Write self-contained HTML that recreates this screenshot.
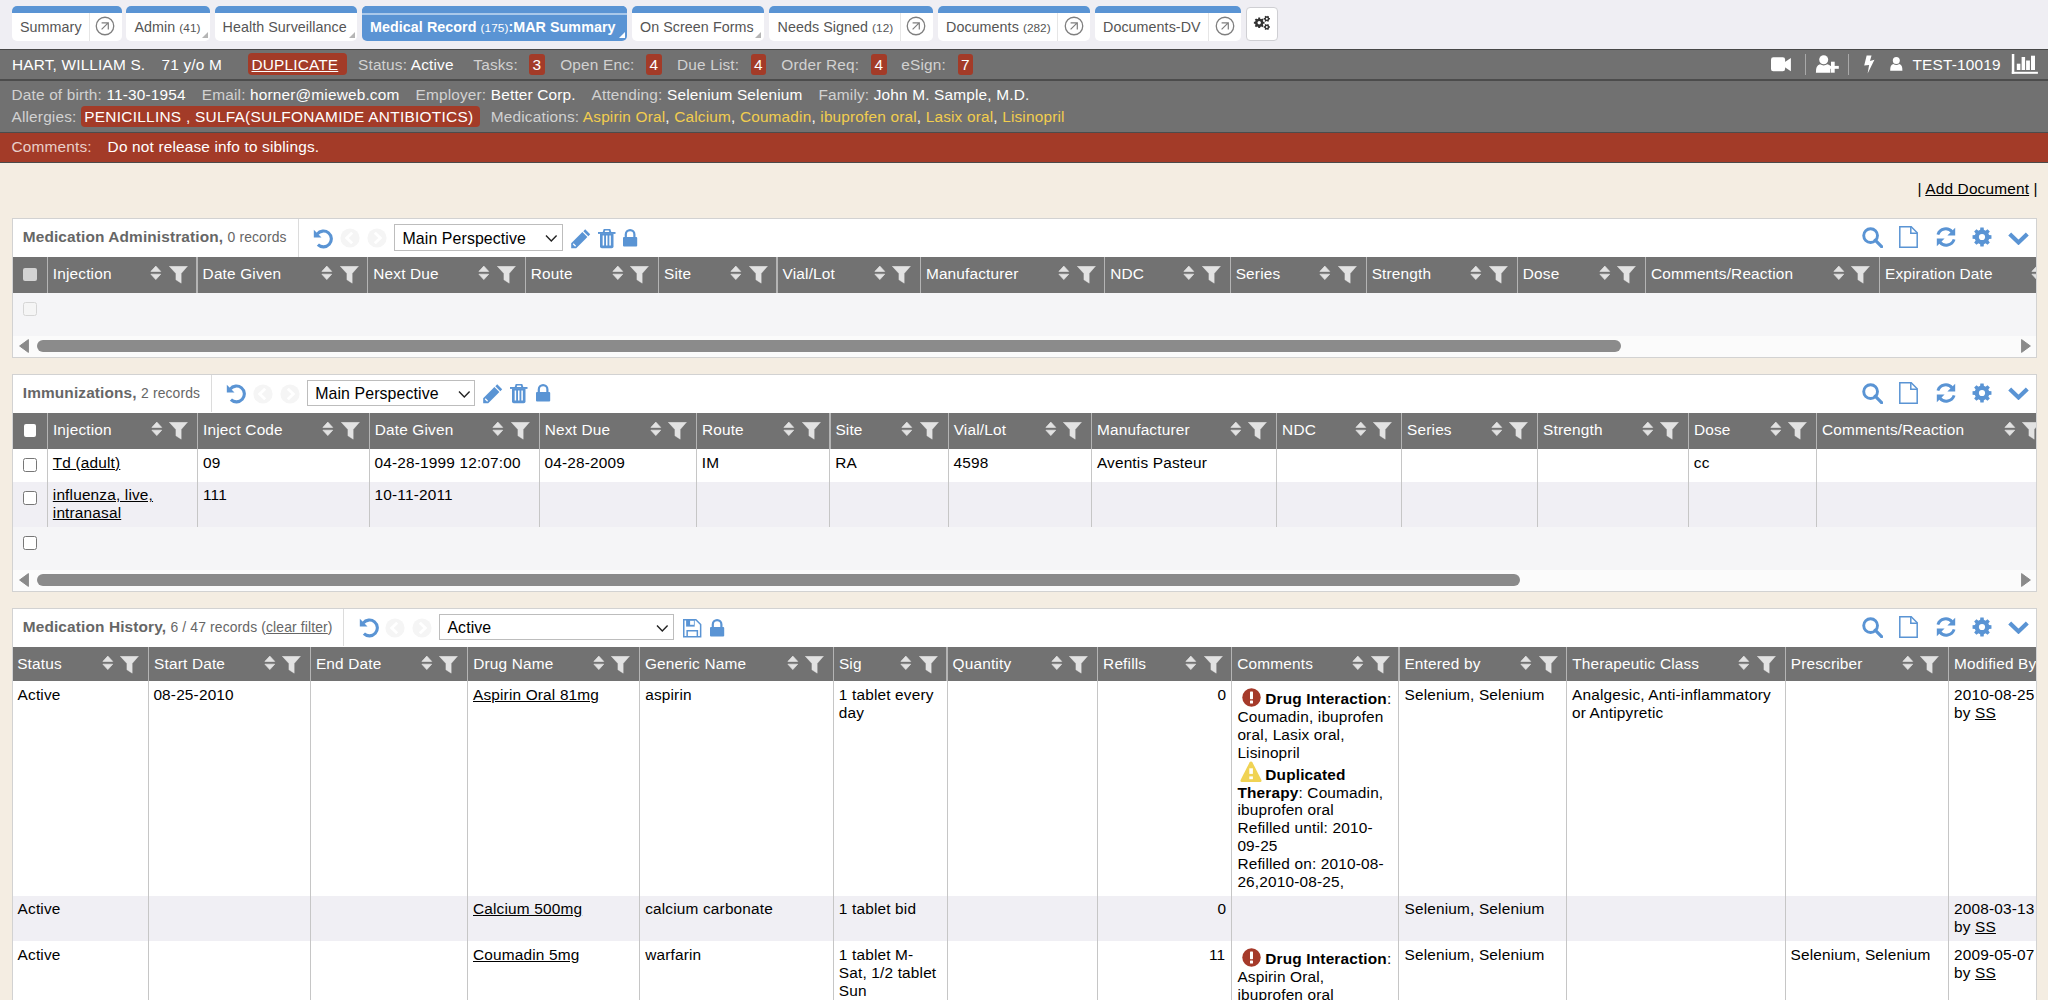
<!DOCTYPE html><html><head><meta charset="utf-8"><style>
html,body{margin:0;padding:0;width:2048px;height:1000px;overflow:hidden;background:#f4ede2;font-family:"Liberation Sans",sans-serif;}
.a{position:absolute;}
.t{position:absolute;white-space:nowrap;}
.u{text-decoration:underline;text-underline-offset:0.6px;}
svg{display:block;}
</style></head><body>
<div class="a" style="left:0px;top:0px;width:2048px;height:49px;background:#efeef3"></div>
<div class="a" style="left:12px;top:6px;width:109.5px;height:34.6px;background:#fff;border-radius:5px 5px 5px 5px;overflow:hidden"></div>
<div class="a" style="left:12px;top:6px;width:109.5px;height:7.4px;background:#5a94d4;border-radius:5px 5px 0 0"></div>
<div class="a" style="left:89.0px;top:13.4px;width:1px;height:27.200000000000003px;background:#e6e6e6"></div>
<svg class="a" style="left:95.3px;top:16.2px;" width="20" height="20" viewBox="0 0 20 20"><circle cx="10" cy="10" r="8.75" fill="none" stroke="#7f7f7f" stroke-width="1.3"/><path d="M6.6 13.4 L13.2 6.9 M6.6 6.9 H13.3 V13.6" fill="none" stroke="#7f7f7f" stroke-width="1.2"/></svg>
<div class="t " style="left:20px;top:18.55px;font-size:14.3px;letter-spacing:0.06px;line-height:17px;color:#555;">Summary</div>
<div class="a" style="left:126px;top:6px;width:84px;height:34.6px;background:#fff;border-radius:5px 5px 5px 5px;overflow:hidden"></div>
<div class="a" style="left:126px;top:6px;width:84px;height:7.4px;background:#5a94d4;border-radius:5px 5px 0 0"></div>
<svg class="a" style="left:201.5px;top:31.800000000000004px;" width="6" height="6" viewBox="0 0 6 6"><path d="M6 0 V6 H0 Z" fill="#b5b5b5"/></svg>
<div class="t " style="left:134.5px;top:18.55px;font-size:14.3px;letter-spacing:0.06px;line-height:17px;color:#555;">Admin <span style="font-size:11.8px">(41)</span></div>
<div class="a" style="left:214.6px;top:6px;width:142.4px;height:34.6px;background:#fff;border-radius:5px 5px 5px 5px;overflow:hidden"></div>
<div class="a" style="left:214.6px;top:6px;width:142.4px;height:7.4px;background:#5a94d4;border-radius:5px 5px 0 0"></div>
<svg class="a" style="left:348.5px;top:31.800000000000004px;" width="6" height="6" viewBox="0 0 6 6"><path d="M6 0 V6 H0 Z" fill="#b5b5b5"/></svg>
<div class="t " style="left:222.5px;top:18.55px;font-size:14.3px;letter-spacing:0.06px;line-height:17px;color:#555;">Health Surveillance</div>
<div class="a" style="left:362px;top:6px;width:265px;height:34.6px;background:#5a94d4;border-radius:5px 5px 5px 5px;overflow:hidden"></div>
<div class="a" style="left:362px;top:6px;width:265px;height:7.4px;background:#5a94d4;border-radius:5px 5px 0 0"></div>
<div class="a" style="left:362px;top:13.4px;width:265px;height:1.3px;background:#a9c8ea"></div>
<svg class="a" style="left:618.5px;top:31.800000000000004px;" width="6" height="6" viewBox="0 0 6 6"><path d="M6 0 V6 H0 Z" fill="#fff"/></svg>
<div class="t " style="left:370px;top:18.55px;font-size:14.3px;letter-spacing:0.06px;line-height:17px;color:#fff;font-weight:bold;">Medical Record <span style="font-size:11.8px;font-weight:normal">(175)</span>:MAR Summary</div>
<div class="a" style="left:632px;top:6px;width:131.70000000000005px;height:34.6px;background:#fff;border-radius:5px 5px 5px 5px;overflow:hidden"></div>
<div class="a" style="left:632px;top:6px;width:131.70000000000005px;height:7.4px;background:#5a94d4;border-radius:5px 5px 0 0"></div>
<svg class="a" style="left:755.2px;top:31.800000000000004px;" width="6" height="6" viewBox="0 0 6 6"><path d="M6 0 V6 H0 Z" fill="#b5b5b5"/></svg>
<div class="t " style="left:640px;top:18.55px;font-size:14.3px;letter-spacing:0.06px;line-height:17px;color:#555;">On Screen Forms</div>
<div class="a" style="left:769px;top:6px;width:163.79999999999995px;height:34.6px;background:#fff;border-radius:5px 5px 5px 5px;overflow:hidden"></div>
<div class="a" style="left:769px;top:6px;width:163.79999999999995px;height:7.4px;background:#5a94d4;border-radius:5px 5px 0 0"></div>
<div class="a" style="left:900.0px;top:13.4px;width:1px;height:27.200000000000003px;background:#e6e6e6"></div>
<svg class="a" style="left:905.9px;top:16.2px;" width="20" height="20" viewBox="0 0 20 20"><circle cx="10" cy="10" r="8.75" fill="none" stroke="#7f7f7f" stroke-width="1.3"/><path d="M6.6 13.4 L13.2 6.9 M6.6 6.9 H13.3 V13.6" fill="none" stroke="#7f7f7f" stroke-width="1.2"/></svg>
<div class="t " style="left:777.5px;top:18.55px;font-size:14.3px;letter-spacing:0.06px;line-height:17px;color:#555;">Needs Signed <span style="font-size:11.8px">(12)</span></div>
<div class="a" style="left:938px;top:6px;width:151.5999999999999px;height:34.6px;background:#fff;border-radius:5px 5px 5px 5px;overflow:hidden"></div>
<div class="a" style="left:938px;top:6px;width:151.5999999999999px;height:7.4px;background:#5a94d4;border-radius:5px 5px 0 0"></div>
<div class="a" style="left:1056.9px;top:13.4px;width:1px;height:27.200000000000003px;background:#e6e6e6"></div>
<svg class="a" style="left:1063.5px;top:16.2px;" width="20" height="20" viewBox="0 0 20 20"><circle cx="10" cy="10" r="8.75" fill="none" stroke="#7f7f7f" stroke-width="1.3"/><path d="M6.6 13.4 L13.2 6.9 M6.6 6.9 H13.3 V13.6" fill="none" stroke="#7f7f7f" stroke-width="1.2"/></svg>
<div class="t " style="left:946px;top:18.55px;font-size:14.3px;letter-spacing:0.06px;line-height:17px;color:#555;">Documents <span style="font-size:11.8px">(282)</span></div>
<div class="a" style="left:1095.2px;top:6px;width:145.5999999999999px;height:34.6px;background:#fff;border-radius:5px 5px 5px 5px;overflow:hidden"></div>
<div class="a" style="left:1095.2px;top:6px;width:145.5999999999999px;height:7.4px;background:#5a94d4;border-radius:5px 5px 0 0"></div>
<div class="a" style="left:1207.5px;top:13.4px;width:1px;height:27.200000000000003px;background:#e6e6e6"></div>
<svg class="a" style="left:1214.5px;top:16.2px;" width="20" height="20" viewBox="0 0 20 20"><circle cx="10" cy="10" r="8.75" fill="none" stroke="#7f7f7f" stroke-width="1.3"/><path d="M6.6 13.4 L13.2 6.9 M6.6 6.9 H13.3 V13.6" fill="none" stroke="#7f7f7f" stroke-width="1.2"/></svg>
<div class="t " style="left:1103px;top:18.55px;font-size:14.3px;letter-spacing:0.06px;line-height:17px;color:#555;">Documents-DV</div>
<div class="a" style="left:1246px;top:6.6px;width:29.6px;height:32px;background:#fff;border:1px solid #cfcfd3;border-radius:4px"></div>
<svg class="a" style="left:1251px;top:12px;" width="21" height="21" viewBox="0 0 21 21"><path d="M12.06 9.73 L13.52 9.87 L13.52 11.73 L12.06 11.87 L11.68 12.77 L12.62 13.91 L11.31 15.22 L10.17 14.28 L9.27 14.66 L9.13 16.12 L7.27 16.12 L7.13 14.66 L6.23 14.28 L5.09 15.22 L3.78 13.91 L4.72 12.77 L4.34 11.87 L2.88 11.73 L2.88 9.87 L4.34 9.73 L4.72 8.83 L3.78 7.69 L5.09 6.38 L6.23 7.32 L7.13 6.94 L7.27 5.48 L9.13 5.48 L9.27 6.94 L10.17 7.32 L11.31 6.38 L12.62 7.69 L11.68 8.83 Z" fill="#333"/><circle cx="8.2" cy="10.8" r="3.92" fill="#333"/><circle cx="8.2" cy="10.8" r="1.7" fill="#fff"/><path d="M17.95 5.99 L18.92 6.07 L18.92 7.53 L17.95 7.61 L17.58 8.26 L17.99 9.13 L16.72 9.86 L16.17 9.07 L15.43 9.07 L14.88 9.86 L13.61 9.13 L14.02 8.26 L13.65 7.61 L12.68 7.53 L12.68 6.07 L13.65 5.99 L14.02 5.34 L13.61 4.47 L14.88 3.74 L15.43 4.53 L16.17 4.53 L16.72 3.74 L17.99 4.47 L17.58 5.34 Z" fill="#333"/><circle cx="15.8" cy="6.8" r="2.25" fill="#333"/><circle cx="15.8" cy="6.8" r="1.0" fill="#fff"/><path d="M17.95 14.19 L18.92 14.27 L18.92 15.73 L17.95 15.81 L17.58 16.46 L17.99 17.33 L16.72 18.06 L16.17 17.27 L15.43 17.27 L14.88 18.06 L13.61 17.33 L14.02 16.46 L13.65 15.81 L12.68 15.73 L12.68 14.27 L13.65 14.19 L14.02 13.54 L13.61 12.67 L14.88 11.94 L15.43 12.73 L16.17 12.73 L16.72 11.94 L17.99 12.67 L17.58 13.54 Z" fill="#333"/><circle cx="15.8" cy="15" r="2.25" fill="#333"/><circle cx="15.8" cy="15" r="1.0" fill="#fff"/></svg>
<div class="a" style="left:0px;top:48.5px;width:2048px;height:1.5px;background:#474747"></div>
<div class="a" style="left:0px;top:50px;width:2048px;height:29px;background:#717171"></div>
<div class="a" style="left:0px;top:79px;width:2048px;height:1.5px;background:#4c4c4c"></div>
<div class="a" style="left:0px;top:80.5px;width:2048px;height:51px;background:#717171"></div>
<div class="a" style="left:0px;top:131.5px;width:2048px;height:1.5px;background:#4c4c4c"></div>
<div class="a" style="left:0px;top:133px;width:2048px;height:29px;background:#a33b28"></div>
<div class="a" style="left:0px;top:161.7px;width:2048px;height:1.5px;background:#4a4a4a"></div>
<div class="t " style="left:12px;top:55.56px;font-size:15.4px;letter-spacing:0.17px;line-height:18px;color:#fff;">HART, WILLIAM S.</div>
<div class="t " style="left:161.5px;top:55.56px;font-size:15.4px;letter-spacing:0.17px;line-height:18px;color:#fff;">71 y/o M</div>
<div class="a" style="left:248px;top:53.4px;width:98.7px;height:21.4px;background:#a33b28;border-radius:4px"></div>
<div class="t u" style="left:251.5px;top:55.56px;font-size:15.4px;letter-spacing:0.17px;line-height:18px;color:#fff;">DUPLICATE</div>
<div class="t " style="left:358px;top:55.56px;font-size:15.4px;letter-spacing:0.17px;line-height:18px;color:#d2d2d2;">Status: <span style="color:#fff">Active</span></div>
<div class="t " style="left:473.3px;top:55.56px;font-size:15.4px;letter-spacing:0.17px;line-height:18px;color:#d2d2d2;">Tasks:</div>
<div class="a" style="left:529.1px;top:53.6px;width:15.600000000000023px;height:21.2px;background:#a33b28;border-radius:3px"></div>
<div class="t " style="left:532.5000000000001px;top:55.56px;font-size:15.4px;letter-spacing:0.17px;line-height:18px;color:#fff;">3</div>
<div class="t " style="left:560.2px;top:55.56px;font-size:15.4px;letter-spacing:0.17px;line-height:18px;color:#d2d2d2;">Open Enc:</div>
<div class="a" style="left:646px;top:53.6px;width:15.799999999999955px;height:21.2px;background:#a33b28;border-radius:3px"></div>
<div class="t " style="left:649.5px;top:55.56px;font-size:15.4px;letter-spacing:0.17px;line-height:18px;color:#fff;">4</div>
<div class="t " style="left:677px;top:55.56px;font-size:15.4px;letter-spacing:0.17px;line-height:18px;color:#d2d2d2;">Due List:</div>
<div class="a" style="left:750.8px;top:53.6px;width:15.200000000000045px;height:21.2px;background:#a33b28;border-radius:3px"></div>
<div class="t " style="left:754.0px;top:55.56px;font-size:15.4px;letter-spacing:0.17px;line-height:18px;color:#fff;">4</div>
<div class="t " style="left:781.3px;top:55.56px;font-size:15.4px;letter-spacing:0.17px;line-height:18px;color:#d2d2d2;">Order Req:</div>
<div class="a" style="left:870.8px;top:53.6px;width:16.200000000000045px;height:21.2px;background:#a33b28;border-radius:3px"></div>
<div class="t " style="left:874.5px;top:55.56px;font-size:15.4px;letter-spacing:0.17px;line-height:18px;color:#fff;">4</div>
<div class="t " style="left:901.3px;top:55.56px;font-size:15.4px;letter-spacing:0.17px;line-height:18px;color:#d2d2d2;">eSign:</div>
<div class="a" style="left:957.7px;top:53.6px;width:15.199999999999932px;height:21.2px;background:#a33b28;border-radius:3px"></div>
<div class="t " style="left:960.9px;top:55.56px;font-size:15.4px;letter-spacing:0.17px;line-height:18px;color:#fff;">7</div>
<svg class="a" style="left:1770.5px;top:56.8px;" width="21" height="15" viewBox="0 0 21 15"><rect x="0" y="0.2" width="14.1" height="14" rx="2.3" fill="#fff"/><path d="M13.5 5.3 L19.9 0.9 V14.2 L13.5 10 Z" fill="#fff"/></svg>
<div class="a" style="left:1805.2px;top:53.6px;width:1.2px;height:21.8px;background:#a9a9a9"></div>
<svg class="a" style="left:1815px;top:55px;" width="24" height="19" viewBox="0 0 24 19"><circle cx="8.7" cy="4.8" r="4.5" fill="#fff"/><path d="M0.9 17.7 Q0.5 10.6 5 9.3 Q8.7 11.6 12.4 9.3 Q14.6 9.8 15.4 11 V17.7 Z" fill="#fff"/><rect x="16" y="6.7" width="3.7" height="11" fill="#fff"/><rect x="11.6" y="10.9" width="12.2" height="2.9" fill="#fff"/></svg>
<div class="a" style="left:1847.8px;top:53.6px;width:1.2px;height:21.8px;background:#a9a9a9"></div>
<svg class="a" style="left:1863.5px;top:54.5px;" width="11" height="19" viewBox="0 0 11 19"><path d="M2.65 0.38 L7.54 0.38 L5.97 6 L10.46 4.78 L3.63 18.45 L5.1 9.9 L0.21 10.4 Z" fill="#fff"/></svg>
<svg class="a" style="left:1889.5px;top:57px;" width="13" height="14" viewBox="0 0 13 14"><circle cx="6.3" cy="3.6" r="3.5" fill="#fff"/><path d="M0.2 13.8 Q0 7.6 3.3 7 Q6.3 9.2 9.3 7 Q12.6 7.6 12.4 13.8 Z" fill="#fff"/></svg>
<div class="t " style="left:1912.5px;top:55.56px;font-size:15.4px;letter-spacing:0.17px;line-height:18px;color:#fff;">TEST-10019</div>
<svg class="a" style="left:2011px;top:54px;" width="28" height="20" viewBox="0 0 28 20"><rect x="0.8" y="0" width="2.5" height="19.8" fill="#fff"/><rect x="0.8" y="17.8" width="26.1" height="2" fill="#fff"/><rect x="5.8" y="9.7" width="3.6" height="6.3" fill="#fff"/><rect x="10.6" y="3" width="3.5" height="13" fill="#fff"/><rect x="15.1" y="6.5" width="3.8" height="9.5" fill="#fff"/><rect x="20" y="1.7" width="4" height="14.3" fill="#fff"/></svg>
<div class="t " style="left:11.5px;top:86.16px;font-size:15.4px;letter-spacing:0.17px;line-height:18px;color:#d2d2d2;">Date of birth: <span style="color:#fff">11-30-1954</span></div>
<div class="t " style="left:201.8px;top:86.16px;font-size:15.4px;letter-spacing:0.17px;line-height:18px;color:#d2d2d2;">Email: <span style="color:#fff">horner@mieweb.com</span></div>
<div class="t " style="left:415.5px;top:86.16px;font-size:15.4px;letter-spacing:0.17px;line-height:18px;color:#d2d2d2;">Employer: <span style="color:#fff">Better Corp.</span></div>
<div class="t " style="left:591.5px;top:86.16px;font-size:15.4px;letter-spacing:0.17px;line-height:18px;color:#d2d2d2;">Attending: <span style="color:#fff">Selenium Selenium</span></div>
<div class="t " style="left:818.5px;top:86.16px;font-size:15.4px;letter-spacing:0.17px;line-height:18px;color:#d2d2d2;">Family: <span style="color:#fff">John M. Sample, M.D.</span></div>
<div class="t " style="left:11.5px;top:107.66px;font-size:15.4px;letter-spacing:0.17px;line-height:18px;color:#d2d2d2;">Allergies:</div>
<div class="a" style="left:81px;top:105.9px;width:398.9px;height:21.6px;background:#a33b28;border-radius:4px"></div>
<div class="t " style="left:84.3px;top:107.66px;font-size:15.4px;letter-spacing:0.17px;line-height:18px;color:#fff;letter-spacing:0.27px">PENICILLINS , SULFA(SULFONAMIDE ANTIBIOTICS)</div>
<div class="t " style="left:490.8px;top:107.66px;font-size:15.4px;letter-spacing:0.17px;line-height:18px;color:#d2d2d2;">Medications: <span style="color:#f2cd4e">Aspirin Oral</span><span style="color:#fff">,</span> <span style="color:#f2cd4e">Calcium</span><span style="color:#fff">,</span> <span style="color:#f2cd4e">Coumadin</span><span style="color:#fff">,</span> <span style="color:#f2cd4e">ibuprofen oral</span><span style="color:#fff">,</span> <span style="color:#f2cd4e">Lasix oral</span><span style="color:#fff">,</span> <span style="color:#f2cd4e">Lisinopril</span></div>
<div class="t " style="left:11.5px;top:137.96px;font-size:15.4px;letter-spacing:0.17px;line-height:18px;color:#e9cfc8;">Comments:</div>
<div class="t " style="left:107.6px;top:137.96px;font-size:15.4px;letter-spacing:0.17px;line-height:18px;color:#fff;">Do not release info to siblings.</div>
<div class="t " style="left:1917.5px;top:180.16px;font-size:15.4px;letter-spacing:0.17px;line-height:18px;color:#000;">| <span class="u">Add Document</span> |</div>
<div class="a" style="left:12px;top:218px;width:2025px;height:140px;background:#fff;border:1px solid #d2d2d2;box-sizing:border-box"></div>
<div class="t" style="left:22.8px;top:227.09px;font-size:15.4px;letter-spacing:0.13px;line-height:19px;color:#666"><b>Medication Administration,</b> <span style="font-size:13.9px">0 records</span></div>
<div class="a" style="left:297.5px;top:219px;width:1px;height:37.5px;background:#dcdcdc"></div>
<svg class="a" style="left:313px;top:228.5px;" width="20" height="20" viewBox="0 0 20 20"><path d="M4.9 15.6 A7.9 7.9 0 1 0 4.2 5.1" fill="none" stroke="#5a94d4" stroke-width="3.1"/><path d="M0.8 0.8 L0.8 8.5 L8.5 8.5 Z" fill="#5a94d4"/></svg>
<svg class="a" style="left:339.8px;top:228.4px;" width="20" height="20" viewBox="0 0 20 20"><circle cx="10" cy="10" r="9.6" fill="#f5f5f5"/><path d="M12.2 4.7 L6.7 10 L12.2 15.3" fill="none" stroke="#fff" stroke-width="2.8"/></svg>
<svg class="a" style="left:366.7px;top:228.4px;" width="20" height="20" viewBox="0 0 20 20"><circle cx="10" cy="10" r="9.6" fill="#f5f5f5"/><path d="M7.8 4.7 L13.3 10 L7.8 15.3" fill="none" stroke="#fff" stroke-width="2.8"/></svg>
<div class="a" style="left:394.3px;top:224.3px;width:168.3px;height:26.3px;background:#fff;border:1px solid #bdbdbd;box-sizing:border-box"></div>
<div class="t " style="left:402.5px;top:228.99px;font-size:15.9px;letter-spacing:0.1px;line-height:19px;color:#000;">Main Perspective</div>
<svg class="a" style="left:545.0px;top:234.0px;" width="13" height="9" viewBox="0 0 13 9"><path d="M1 1.5 L6.3 7 L11.6 1.5" fill="none" stroke="#222" stroke-width="1.4"/></svg>
<svg class="a" style="left:570.5px;top:228.5px;" width="20" height="20" viewBox="0 0 20 20"><path d="M14.2 0.3 L19.2 5.3 L17.3 7.2 L12.3 2.2 Z" fill="#5a94d4"/><path d="M11.4 3.1 L16.4 8.1 L5.2 19.3 L0.2 19.3 L0.2 14.3 Z" fill="#5a94d4"/><path d="M2.2 14.8 L4.6 17.2" stroke="#fff" stroke-width="1.3"/></svg>
<svg class="a" style="left:597.7px;top:228.8px;" width="18" height="20" viewBox="0 0 18 20"><path d="M5.6 3.2 L6.5 0.6 H11.5 L12.4 3.2" fill="none" stroke="#5a94d4" stroke-width="1.9"/><rect x="0" y="3" width="17.5" height="1.9" fill="#5a94d4"/><path d="M2 4.5 H15.5 V17.5 Q15.5 19.3 13.7 19.3 H3.8 Q2 19.3 2 17.5 Z" fill="#5a94d4"/><path d="M5.4 6.5 V16.6 M8.75 6.5 V16.6 M12.1 6.5 V16.6" stroke="#fff" stroke-width="1.5"/></svg>
<svg class="a" style="left:623px;top:228.9px;" width="15" height="18" viewBox="0 0 15 18"><path d="M2.8 8.5 V5.4 A4.3 4.3 0 0 1 11.4 5.4 V8.5" fill="none" stroke="#5a94d4" stroke-width="2.2"/><rect x="0" y="8" width="14.2" height="9.6" rx="1" fill="#5a94d4"/></svg>
<svg class="a" style="left:1862px;top:227px;" width="21" height="21" viewBox="0 0 21 21"><circle cx="8.6" cy="8.6" r="6.9" fill="none" stroke="#5a94d4" stroke-width="2.9"/><path d="M13.2 13.2 L19.6 19.6" stroke="#5a94d4" stroke-width="3.2" stroke-linecap="round"/></svg>
<svg class="a" style="left:1899px;top:226px;" width="19" height="22" viewBox="0 0 19 22"><path d="M0.8 0.8 H12.2 L18.2 6.8 V21.2 H0.8 Z" fill="none" stroke="#5a94d4" stroke-width="1.5"/><path d="M11.8 0.8 V7.2 H18.2" fill="none" stroke="#5a94d4" stroke-width="1.5"/></svg>
<svg class="a" style="left:1935.5px;top:227px;" width="20" height="20" viewBox="0 0 20 20"><path d="M1.9 7.6 A8.2 8.2 0 0 1 16.2 5" fill="none" stroke="#5a94d4" stroke-width="2.9"/><path d="M19.2 0.8 V8.6 H11.4 Z" fill="#5a94d4"/><path d="M18.1 12.4 A8.2 8.2 0 0 1 3.8 15" fill="none" stroke="#5a94d4" stroke-width="2.9"/><path d="M0.8 19.2 V11.4 H8.6 Z" fill="#5a94d4"/></svg>
<svg class="a" style="left:1971.5px;top:227px;" width="20" height="20" viewBox="0 0 20 20"><path d="M16.94 8.08 L19.46 8.35 L19.46 11.65 L16.94 11.92 L16.26 13.55 L17.85 15.52 L15.52 17.85 L13.55 16.26 L11.92 16.94 L11.65 19.46 L8.35 19.46 L8.08 16.94 L6.45 16.26 L4.48 17.85 L2.15 15.52 L3.74 13.55 L3.06 11.92 L0.54 11.65 L0.54 8.35 L3.06 8.08 L3.74 6.45 L2.15 4.48 L4.48 2.15 L6.45 3.74 L8.08 3.06 L8.35 0.54 L11.65 0.54 L11.92 3.06 L13.55 3.74 L15.52 2.15 L17.85 4.48 L16.26 6.45 Z" fill="#5a94d4"/><circle cx="10" cy="10" r="7.06" fill="#5a94d4"/><circle cx="10" cy="10" r="3.1" fill="#fff"/></svg>
<svg class="a" style="left:2007.5px;top:230.6px;" width="21" height="14" viewBox="0 0 21 14"><path d="M1.7 2.9 L10.5 11.4 L19.3 2.9" fill="none" stroke="#5a94d4" stroke-width="4.2"/></svg>
<div class="a" style="left:0;top:0;width:2036px;height:1000px;overflow:hidden">
<div class="a" style="left:13px;top:256.5px;width:2023px;height:36.5px;background:#727272"></div>
<div class="a" style="left:46.6px;top:256.5px;width:1.4px;height:36.5px;background:#b4b4b4"></div>
<div class="t " style="left:52.800000000000004px;top:264.56px;font-size:15.4px;letter-spacing:0.17px;line-height:18px;color:#fff;">Injection</div>
<svg class="a" style="left:150.2px;top:265.3px;" width="12" height="16" viewBox="0 0 12 16"><path d="M0.9 6.4 L5.8 1.1 L10.7 6.4 Z M0.9 9.2 L10.7 9.2 L5.8 14.6 Z" fill="#e2e2e2" stroke="#e2e2e2" stroke-width="0.7" stroke-linejoin="round"/></svg>
<svg class="a" style="left:168.8px;top:265.7px;" width="19" height="18" viewBox="0 0 19 18"><path d="M0.2 0.2 H18.5 L12.2 7.4 V17.2 L6.9 13.8 V7.4 Z" fill="#e2e2e2" stroke="#e2e2e2" stroke-width="0.4" stroke-linejoin="round"/></svg>
<div class="a" style="left:196.4px;top:256.5px;width:1.4px;height:36.5px;background:#b4b4b4"></div>
<div class="t " style="left:202.6px;top:264.56px;font-size:15.4px;letter-spacing:0.17px;line-height:18px;color:#fff;">Date Given</div>
<svg class="a" style="left:320.9px;top:265.3px;" width="12" height="16" viewBox="0 0 12 16"><path d="M0.9 6.4 L5.8 1.1 L10.7 6.4 Z M0.9 9.2 L10.7 9.2 L5.8 14.6 Z" fill="#e2e2e2" stroke="#e2e2e2" stroke-width="0.7" stroke-linejoin="round"/></svg>
<svg class="a" style="left:339.5px;top:265.7px;" width="19" height="18" viewBox="0 0 19 18"><path d="M0.2 0.2 H18.5 L12.2 7.4 V17.2 L6.9 13.8 V7.4 Z" fill="#e2e2e2" stroke="#e2e2e2" stroke-width="0.4" stroke-linejoin="round"/></svg>
<div class="a" style="left:367.09999999999997px;top:256.5px;width:1.4px;height:36.5px;background:#b4b4b4"></div>
<div class="t " style="left:373.3px;top:264.56px;font-size:15.4px;letter-spacing:0.17px;line-height:18px;color:#fff;">Next Due</div>
<svg class="a" style="left:478.40000000000003px;top:265.3px;" width="12" height="16" viewBox="0 0 12 16"><path d="M0.9 6.4 L5.8 1.1 L10.7 6.4 Z M0.9 9.2 L10.7 9.2 L5.8 14.6 Z" fill="#e2e2e2" stroke="#e2e2e2" stroke-width="0.7" stroke-linejoin="round"/></svg>
<svg class="a" style="left:497.00000000000006px;top:265.7px;" width="19" height="18" viewBox="0 0 19 18"><path d="M0.2 0.2 H18.5 L12.2 7.4 V17.2 L6.9 13.8 V7.4 Z" fill="#e2e2e2" stroke="#e2e2e2" stroke-width="0.4" stroke-linejoin="round"/></svg>
<div class="a" style="left:524.6px;top:256.5px;width:1.4px;height:36.5px;background:#b4b4b4"></div>
<div class="t " style="left:530.8000000000001px;top:264.56px;font-size:15.4px;letter-spacing:0.17px;line-height:18px;color:#fff;">Route</div>
<svg class="a" style="left:611.6px;top:265.3px;" width="12" height="16" viewBox="0 0 12 16"><path d="M0.9 6.4 L5.8 1.1 L10.7 6.4 Z M0.9 9.2 L10.7 9.2 L5.8 14.6 Z" fill="#e2e2e2" stroke="#e2e2e2" stroke-width="0.7" stroke-linejoin="round"/></svg>
<svg class="a" style="left:630.1999999999999px;top:265.7px;" width="19" height="18" viewBox="0 0 19 18"><path d="M0.2 0.2 H18.5 L12.2 7.4 V17.2 L6.9 13.8 V7.4 Z" fill="#e2e2e2" stroke="#e2e2e2" stroke-width="0.4" stroke-linejoin="round"/></svg>
<div class="a" style="left:657.8px;top:256.5px;width:1.4px;height:36.5px;background:#b4b4b4"></div>
<div class="t " style="left:664.0px;top:264.56px;font-size:15.4px;letter-spacing:0.17px;line-height:18px;color:#fff;">Site</div>
<svg class="a" style="left:730.2px;top:265.3px;" width="12" height="16" viewBox="0 0 12 16"><path d="M0.9 6.4 L5.8 1.1 L10.7 6.4 Z M0.9 9.2 L10.7 9.2 L5.8 14.6 Z" fill="#e2e2e2" stroke="#e2e2e2" stroke-width="0.7" stroke-linejoin="round"/></svg>
<svg class="a" style="left:748.8px;top:265.7px;" width="19" height="18" viewBox="0 0 19 18"><path d="M0.2 0.2 H18.5 L12.2 7.4 V17.2 L6.9 13.8 V7.4 Z" fill="#e2e2e2" stroke="#e2e2e2" stroke-width="0.4" stroke-linejoin="round"/></svg>
<div class="a" style="left:776.4px;top:256.5px;width:1.4px;height:36.5px;background:#b4b4b4"></div>
<div class="t " style="left:782.6px;top:264.56px;font-size:15.4px;letter-spacing:0.17px;line-height:18px;color:#fff;">Vial/Lot</div>
<svg class="a" style="left:873.5px;top:265.3px;" width="12" height="16" viewBox="0 0 12 16"><path d="M0.9 6.4 L5.8 1.1 L10.7 6.4 Z M0.9 9.2 L10.7 9.2 L5.8 14.6 Z" fill="#e2e2e2" stroke="#e2e2e2" stroke-width="0.7" stroke-linejoin="round"/></svg>
<svg class="a" style="left:892.0999999999999px;top:265.7px;" width="19" height="18" viewBox="0 0 19 18"><path d="M0.2 0.2 H18.5 L12.2 7.4 V17.2 L6.9 13.8 V7.4 Z" fill="#e2e2e2" stroke="#e2e2e2" stroke-width="0.4" stroke-linejoin="round"/></svg>
<div class="a" style="left:919.6999999999999px;top:256.5px;width:1.4px;height:36.5px;background:#b4b4b4"></div>
<div class="t " style="left:925.9px;top:264.56px;font-size:15.4px;letter-spacing:0.17px;line-height:18px;color:#fff;">Manufacturer</div>
<svg class="a" style="left:1057.9px;top:265.3px;" width="12" height="16" viewBox="0 0 12 16"><path d="M0.9 6.4 L5.8 1.1 L10.7 6.4 Z M0.9 9.2 L10.7 9.2 L5.8 14.6 Z" fill="#e2e2e2" stroke="#e2e2e2" stroke-width="0.7" stroke-linejoin="round"/></svg>
<svg class="a" style="left:1076.5px;top:265.7px;" width="19" height="18" viewBox="0 0 19 18"><path d="M0.2 0.2 H18.5 L12.2 7.4 V17.2 L6.9 13.8 V7.4 Z" fill="#e2e2e2" stroke="#e2e2e2" stroke-width="0.4" stroke-linejoin="round"/></svg>
<div class="a" style="left:1104.1000000000001px;top:256.5px;width:1.4px;height:36.5px;background:#b4b4b4"></div>
<div class="t " style="left:1110.3px;top:264.56px;font-size:15.4px;letter-spacing:0.17px;line-height:18px;color:#fff;">NDC</div>
<svg class="a" style="left:1183.3px;top:265.3px;" width="12" height="16" viewBox="0 0 12 16"><path d="M0.9 6.4 L5.8 1.1 L10.7 6.4 Z M0.9 9.2 L10.7 9.2 L5.8 14.6 Z" fill="#e2e2e2" stroke="#e2e2e2" stroke-width="0.7" stroke-linejoin="round"/></svg>
<svg class="a" style="left:1201.8999999999999px;top:265.7px;" width="19" height="18" viewBox="0 0 19 18"><path d="M0.2 0.2 H18.5 L12.2 7.4 V17.2 L6.9 13.8 V7.4 Z" fill="#e2e2e2" stroke="#e2e2e2" stroke-width="0.4" stroke-linejoin="round"/></svg>
<div class="a" style="left:1229.5px;top:256.5px;width:1.4px;height:36.5px;background:#b4b4b4"></div>
<div class="t " style="left:1235.6999999999998px;top:264.56px;font-size:15.4px;letter-spacing:0.17px;line-height:18px;color:#fff;">Series</div>
<svg class="a" style="left:1319.3px;top:265.3px;" width="12" height="16" viewBox="0 0 12 16"><path d="M0.9 6.4 L5.8 1.1 L10.7 6.4 Z M0.9 9.2 L10.7 9.2 L5.8 14.6 Z" fill="#e2e2e2" stroke="#e2e2e2" stroke-width="0.7" stroke-linejoin="round"/></svg>
<svg class="a" style="left:1337.8999999999999px;top:265.7px;" width="19" height="18" viewBox="0 0 19 18"><path d="M0.2 0.2 H18.5 L12.2 7.4 V17.2 L6.9 13.8 V7.4 Z" fill="#e2e2e2" stroke="#e2e2e2" stroke-width="0.4" stroke-linejoin="round"/></svg>
<div class="a" style="left:1365.5px;top:256.5px;width:1.4px;height:36.5px;background:#b4b4b4"></div>
<div class="t " style="left:1371.6999999999998px;top:264.56px;font-size:15.4px;letter-spacing:0.17px;line-height:18px;color:#fff;">Strength</div>
<svg class="a" style="left:1470.4px;top:265.3px;" width="12" height="16" viewBox="0 0 12 16"><path d="M0.9 6.4 L5.8 1.1 L10.7 6.4 Z M0.9 9.2 L10.7 9.2 L5.8 14.6 Z" fill="#e2e2e2" stroke="#e2e2e2" stroke-width="0.7" stroke-linejoin="round"/></svg>
<svg class="a" style="left:1489.0px;top:265.7px;" width="19" height="18" viewBox="0 0 19 18"><path d="M0.2 0.2 H18.5 L12.2 7.4 V17.2 L6.9 13.8 V7.4 Z" fill="#e2e2e2" stroke="#e2e2e2" stroke-width="0.4" stroke-linejoin="round"/></svg>
<div class="a" style="left:1516.6000000000001px;top:256.5px;width:1.4px;height:36.5px;background:#b4b4b4"></div>
<div class="t " style="left:1522.8px;top:264.56px;font-size:15.4px;letter-spacing:0.17px;line-height:18px;color:#fff;">Dose</div>
<svg class="a" style="left:1598.5px;top:265.3px;" width="12" height="16" viewBox="0 0 12 16"><path d="M0.9 6.4 L5.8 1.1 L10.7 6.4 Z M0.9 9.2 L10.7 9.2 L5.8 14.6 Z" fill="#e2e2e2" stroke="#e2e2e2" stroke-width="0.7" stroke-linejoin="round"/></svg>
<svg class="a" style="left:1617.1px;top:265.7px;" width="19" height="18" viewBox="0 0 19 18"><path d="M0.2 0.2 H18.5 L12.2 7.4 V17.2 L6.9 13.8 V7.4 Z" fill="#e2e2e2" stroke="#e2e2e2" stroke-width="0.4" stroke-linejoin="round"/></svg>
<div class="a" style="left:1644.7px;top:256.5px;width:1.4px;height:36.5px;background:#b4b4b4"></div>
<div class="t " style="left:1650.8999999999999px;top:264.56px;font-size:15.4px;letter-spacing:0.17px;line-height:18px;color:#fff;">Comments/Reaction</div>
<svg class="a" style="left:1832.6000000000001px;top:265.3px;" width="12" height="16" viewBox="0 0 12 16"><path d="M0.9 6.4 L5.8 1.1 L10.7 6.4 Z M0.9 9.2 L10.7 9.2 L5.8 14.6 Z" fill="#e2e2e2" stroke="#e2e2e2" stroke-width="0.7" stroke-linejoin="round"/></svg>
<svg class="a" style="left:1851.2px;top:265.7px;" width="19" height="18" viewBox="0 0 19 18"><path d="M0.2 0.2 H18.5 L12.2 7.4 V17.2 L6.9 13.8 V7.4 Z" fill="#e2e2e2" stroke="#e2e2e2" stroke-width="0.4" stroke-linejoin="round"/></svg>
<div class="a" style="left:1878.8000000000002px;top:256.5px;width:1.4px;height:36.5px;background:#b4b4b4"></div>
<div class="t " style="left:1885.0px;top:264.56px;font-size:15.4px;letter-spacing:0.17px;line-height:18px;color:#fff;">Expiration Date</div>
<svg class="a" style="left:2030.6000000000001px;top:265.3px;" width="12" height="16" viewBox="0 0 12 16"><path d="M0.9 6.4 L5.8 1.1 L10.7 6.4 Z M0.9 9.2 L10.7 9.2 L5.8 14.6 Z" fill="#e2e2e2" stroke="#e2e2e2" stroke-width="0.7" stroke-linejoin="round"/></svg>
<svg class="a" style="left:2049.2000000000003px;top:265.7px;" width="19" height="18" viewBox="0 0 19 18"><path d="M0.2 0.2 H18.5 L12.2 7.4 V17.2 L6.9 13.8 V7.4 Z" fill="#e2e2e2" stroke="#e2e2e2" stroke-width="0.4" stroke-linejoin="round"/></svg>
<div class="a" style="left:23.4px;top:267.6px;width:13.3px;height:13.4px;background:#d3d3d3;border-radius:2px"></div>
<div class="a" style="left:13px;top:293px;width:2023px;height:42.5px;background:#f5f5f7"></div>
<div class="a" style="left:23px;top:302.2px;width:12px;height:12px;border:1px solid #d6d6d6;background:#f5f5f5;border-radius:2.5px"></div>
<div class="a" style="left:13px;top:335.5px;width:2023px;height:21.5px;background:#fbfbfb"></div>
<svg class="a" style="left:18.5px;top:339.25px;" width="10" height="14" viewBox="0 0 10 14"><path d="M9.4 0.6 V13.4 L0.6 7 Z" fill="#8a8a8a" stroke="#8a8a8a" stroke-width="1" stroke-linejoin="round"/></svg>
<div class="a" style="left:37px;top:340.15px;width:1584px;height:12.2px;background:#8b8b8b;border-radius:6.1px"></div>
<svg class="a" style="left:2020.6px;top:339.25px;" width="10" height="14" viewBox="0 0 10 14"><path d="M0.6 0.6 V13.4 L9.4 7 Z" fill="#8a8a8a" stroke="#8a8a8a" stroke-width="1" stroke-linejoin="round"/></svg>
</div>
<div class="a" style="left:12px;top:373.5px;width:2025px;height:218.5px;background:#fff;border:1px solid #d2d2d2;box-sizing:border-box"></div>
<div class="t" style="left:22.8px;top:382.59px;font-size:15.4px;letter-spacing:0.13px;line-height:19px;color:#666"><b>Immunizations,</b> <span style="font-size:13.9px">2 records</span></div>
<div class="a" style="left:211px;top:374.5px;width:1px;height:37.5px;background:#dcdcdc"></div>
<svg class="a" style="left:226px;top:384.0px;" width="20" height="20" viewBox="0 0 20 20"><path d="M4.9 15.6 A7.9 7.9 0 1 0 4.2 5.1" fill="none" stroke="#5a94d4" stroke-width="3.1"/><path d="M0.8 0.8 L0.8 8.5 L8.5 8.5 Z" fill="#5a94d4"/></svg>
<svg class="a" style="left:252.8px;top:383.9px;" width="20" height="20" viewBox="0 0 20 20"><circle cx="10" cy="10" r="9.6" fill="#f5f5f5"/><path d="M12.2 4.7 L6.7 10 L12.2 15.3" fill="none" stroke="#fff" stroke-width="2.8"/></svg>
<svg class="a" style="left:279.7px;top:383.9px;" width="20" height="20" viewBox="0 0 20 20"><circle cx="10" cy="10" r="9.6" fill="#f5f5f5"/><path d="M7.8 4.7 L13.3 10 L7.8 15.3" fill="none" stroke="#fff" stroke-width="2.8"/></svg>
<div class="a" style="left:307px;top:379.79999999999995px;width:168.3px;height:26.3px;background:#fff;border:1px solid #bdbdbd;box-sizing:border-box"></div>
<div class="t " style="left:315.2px;top:384.49px;font-size:15.9px;letter-spacing:0.1px;line-height:19px;color:#000;">Main Perspective</div>
<svg class="a" style="left:457.7px;top:389.5px;" width="13" height="9" viewBox="0 0 13 9"><path d="M1 1.5 L6.3 7 L11.6 1.5" fill="none" stroke="#222" stroke-width="1.4"/></svg>
<svg class="a" style="left:483.2px;top:384.0px;" width="20" height="20" viewBox="0 0 20 20"><path d="M14.2 0.3 L19.2 5.3 L17.3 7.2 L12.3 2.2 Z" fill="#5a94d4"/><path d="M11.4 3.1 L16.4 8.1 L5.2 19.3 L0.2 19.3 L0.2 14.3 Z" fill="#5a94d4"/><path d="M2.2 14.8 L4.6 17.2" stroke="#fff" stroke-width="1.3"/></svg>
<svg class="a" style="left:510.40000000000003px;top:384.29999999999995px;" width="18" height="20" viewBox="0 0 18 20"><path d="M5.6 3.2 L6.5 0.6 H11.5 L12.4 3.2" fill="none" stroke="#5a94d4" stroke-width="1.9"/><rect x="0" y="3" width="17.5" height="1.9" fill="#5a94d4"/><path d="M2 4.5 H15.5 V17.5 Q15.5 19.3 13.7 19.3 H3.8 Q2 19.3 2 17.5 Z" fill="#5a94d4"/><path d="M5.4 6.5 V16.6 M8.75 6.5 V16.6 M12.1 6.5 V16.6" stroke="#fff" stroke-width="1.5"/></svg>
<svg class="a" style="left:535.7px;top:384.4px;" width="15" height="18" viewBox="0 0 15 18"><path d="M2.8 8.5 V5.4 A4.3 4.3 0 0 1 11.4 5.4 V8.5" fill="none" stroke="#5a94d4" stroke-width="2.2"/><rect x="0" y="8" width="14.2" height="9.6" rx="1" fill="#5a94d4"/></svg>
<svg class="a" style="left:1862px;top:382.5px;" width="21" height="21" viewBox="0 0 21 21"><circle cx="8.6" cy="8.6" r="6.9" fill="none" stroke="#5a94d4" stroke-width="2.9"/><path d="M13.2 13.2 L19.6 19.6" stroke="#5a94d4" stroke-width="3.2" stroke-linecap="round"/></svg>
<svg class="a" style="left:1899px;top:381.5px;" width="19" height="22" viewBox="0 0 19 22"><path d="M0.8 0.8 H12.2 L18.2 6.8 V21.2 H0.8 Z" fill="none" stroke="#5a94d4" stroke-width="1.5"/><path d="M11.8 0.8 V7.2 H18.2" fill="none" stroke="#5a94d4" stroke-width="1.5"/></svg>
<svg class="a" style="left:1935.5px;top:382.5px;" width="20" height="20" viewBox="0 0 20 20"><path d="M1.9 7.6 A8.2 8.2 0 0 1 16.2 5" fill="none" stroke="#5a94d4" stroke-width="2.9"/><path d="M19.2 0.8 V8.6 H11.4 Z" fill="#5a94d4"/><path d="M18.1 12.4 A8.2 8.2 0 0 1 3.8 15" fill="none" stroke="#5a94d4" stroke-width="2.9"/><path d="M0.8 19.2 V11.4 H8.6 Z" fill="#5a94d4"/></svg>
<svg class="a" style="left:1971.5px;top:382.5px;" width="20" height="20" viewBox="0 0 20 20"><path d="M16.94 8.08 L19.46 8.35 L19.46 11.65 L16.94 11.92 L16.26 13.55 L17.85 15.52 L15.52 17.85 L13.55 16.26 L11.92 16.94 L11.65 19.46 L8.35 19.46 L8.08 16.94 L6.45 16.26 L4.48 17.85 L2.15 15.52 L3.74 13.55 L3.06 11.92 L0.54 11.65 L0.54 8.35 L3.06 8.08 L3.74 6.45 L2.15 4.48 L4.48 2.15 L6.45 3.74 L8.08 3.06 L8.35 0.54 L11.65 0.54 L11.92 3.06 L13.55 3.74 L15.52 2.15 L17.85 4.48 L16.26 6.45 Z" fill="#5a94d4"/><circle cx="10" cy="10" r="7.06" fill="#5a94d4"/><circle cx="10" cy="10" r="3.1" fill="#fff"/></svg>
<svg class="a" style="left:2007.5px;top:386.1px;" width="21" height="14" viewBox="0 0 21 14"><path d="M1.7 2.9 L10.5 11.4 L19.3 2.9" fill="none" stroke="#5a94d4" stroke-width="4.2"/></svg>
<div class="a" style="left:0;top:0;width:2036px;height:1000px;overflow:hidden">
<div class="a" style="left:13px;top:412.5px;width:2023px;height:36.5px;background:#727272"></div>
<div class="a" style="left:46.699999999999996px;top:412.5px;width:1.4px;height:36.5px;background:#b4b4b4"></div>
<div class="t " style="left:52.9px;top:420.56px;font-size:15.4px;letter-spacing:0.17px;line-height:18px;color:#fff;">Injection</div>
<svg class="a" style="left:150.7px;top:421.3px;" width="12" height="16" viewBox="0 0 12 16"><path d="M0.9 6.4 L5.8 1.1 L10.7 6.4 Z M0.9 9.2 L10.7 9.2 L5.8 14.6 Z" fill="#e2e2e2" stroke="#e2e2e2" stroke-width="0.7" stroke-linejoin="round"/></svg>
<svg class="a" style="left:169.3px;top:421.7px;" width="19" height="18" viewBox="0 0 19 18"><path d="M0.2 0.2 H18.5 L12.2 7.4 V17.2 L6.9 13.8 V7.4 Z" fill="#e2e2e2" stroke="#e2e2e2" stroke-width="0.4" stroke-linejoin="round"/></svg>
<div class="a" style="left:196.9px;top:412.5px;width:1.4px;height:36.5px;background:#b4b4b4"></div>
<div class="t " style="left:203.1px;top:420.56px;font-size:15.4px;letter-spacing:0.17px;line-height:18px;color:#fff;">Inject Code</div>
<svg class="a" style="left:322.3px;top:421.3px;" width="12" height="16" viewBox="0 0 12 16"><path d="M0.9 6.4 L5.8 1.1 L10.7 6.4 Z M0.9 9.2 L10.7 9.2 L5.8 14.6 Z" fill="#e2e2e2" stroke="#e2e2e2" stroke-width="0.7" stroke-linejoin="round"/></svg>
<svg class="a" style="left:340.90000000000003px;top:421.7px;" width="19" height="18" viewBox="0 0 19 18"><path d="M0.2 0.2 H18.5 L12.2 7.4 V17.2 L6.9 13.8 V7.4 Z" fill="#e2e2e2" stroke="#e2e2e2" stroke-width="0.4" stroke-linejoin="round"/></svg>
<div class="a" style="left:368.5px;top:412.5px;width:1.4px;height:36.5px;background:#b4b4b4"></div>
<div class="t " style="left:374.70000000000005px;top:420.56px;font-size:15.4px;letter-spacing:0.17px;line-height:18px;color:#fff;">Date Given</div>
<svg class="a" style="left:492.3px;top:421.3px;" width="12" height="16" viewBox="0 0 12 16"><path d="M0.9 6.4 L5.8 1.1 L10.7 6.4 Z M0.9 9.2 L10.7 9.2 L5.8 14.6 Z" fill="#e2e2e2" stroke="#e2e2e2" stroke-width="0.7" stroke-linejoin="round"/></svg>
<svg class="a" style="left:510.90000000000003px;top:421.7px;" width="19" height="18" viewBox="0 0 19 18"><path d="M0.2 0.2 H18.5 L12.2 7.4 V17.2 L6.9 13.8 V7.4 Z" fill="#e2e2e2" stroke="#e2e2e2" stroke-width="0.4" stroke-linejoin="round"/></svg>
<div class="a" style="left:538.5px;top:412.5px;width:1.4px;height:36.5px;background:#b4b4b4"></div>
<div class="t " style="left:544.7px;top:420.56px;font-size:15.4px;letter-spacing:0.17px;line-height:18px;color:#fff;">Next Due</div>
<svg class="a" style="left:649.5px;top:421.3px;" width="12" height="16" viewBox="0 0 12 16"><path d="M0.9 6.4 L5.8 1.1 L10.7 6.4 Z M0.9 9.2 L10.7 9.2 L5.8 14.6 Z" fill="#e2e2e2" stroke="#e2e2e2" stroke-width="0.7" stroke-linejoin="round"/></svg>
<svg class="a" style="left:668.0999999999999px;top:421.7px;" width="19" height="18" viewBox="0 0 19 18"><path d="M0.2 0.2 H18.5 L12.2 7.4 V17.2 L6.9 13.8 V7.4 Z" fill="#e2e2e2" stroke="#e2e2e2" stroke-width="0.4" stroke-linejoin="round"/></svg>
<div class="a" style="left:695.6999999999999px;top:412.5px;width:1.4px;height:36.5px;background:#b4b4b4"></div>
<div class="t " style="left:701.9px;top:420.56px;font-size:15.4px;letter-spacing:0.17px;line-height:18px;color:#fff;">Route</div>
<svg class="a" style="left:783.0px;top:421.3px;" width="12" height="16" viewBox="0 0 12 16"><path d="M0.9 6.4 L5.8 1.1 L10.7 6.4 Z M0.9 9.2 L10.7 9.2 L5.8 14.6 Z" fill="#e2e2e2" stroke="#e2e2e2" stroke-width="0.7" stroke-linejoin="round"/></svg>
<svg class="a" style="left:801.5999999999999px;top:421.7px;" width="19" height="18" viewBox="0 0 19 18"><path d="M0.2 0.2 H18.5 L12.2 7.4 V17.2 L6.9 13.8 V7.4 Z" fill="#e2e2e2" stroke="#e2e2e2" stroke-width="0.4" stroke-linejoin="round"/></svg>
<div class="a" style="left:829.1999999999999px;top:412.5px;width:1.4px;height:36.5px;background:#b4b4b4"></div>
<div class="t " style="left:835.4px;top:420.56px;font-size:15.4px;letter-spacing:0.17px;line-height:18px;color:#fff;">Site</div>
<svg class="a" style="left:901.3000000000001px;top:421.3px;" width="12" height="16" viewBox="0 0 12 16"><path d="M0.9 6.4 L5.8 1.1 L10.7 6.4 Z M0.9 9.2 L10.7 9.2 L5.8 14.6 Z" fill="#e2e2e2" stroke="#e2e2e2" stroke-width="0.7" stroke-linejoin="round"/></svg>
<svg class="a" style="left:919.9px;top:421.7px;" width="19" height="18" viewBox="0 0 19 18"><path d="M0.2 0.2 H18.5 L12.2 7.4 V17.2 L6.9 13.8 V7.4 Z" fill="#e2e2e2" stroke="#e2e2e2" stroke-width="0.4" stroke-linejoin="round"/></svg>
<div class="a" style="left:947.5px;top:412.5px;width:1.4px;height:36.5px;background:#b4b4b4"></div>
<div class="t " style="left:953.7px;top:420.56px;font-size:15.4px;letter-spacing:0.17px;line-height:18px;color:#fff;">Vial/Lot</div>
<svg class="a" style="left:1044.6000000000001px;top:421.3px;" width="12" height="16" viewBox="0 0 12 16"><path d="M0.9 6.4 L5.8 1.1 L10.7 6.4 Z M0.9 9.2 L10.7 9.2 L5.8 14.6 Z" fill="#e2e2e2" stroke="#e2e2e2" stroke-width="0.7" stroke-linejoin="round"/></svg>
<svg class="a" style="left:1063.2px;top:421.7px;" width="19" height="18" viewBox="0 0 19 18"><path d="M0.2 0.2 H18.5 L12.2 7.4 V17.2 L6.9 13.8 V7.4 Z" fill="#e2e2e2" stroke="#e2e2e2" stroke-width="0.4" stroke-linejoin="round"/></svg>
<div class="a" style="left:1090.8000000000002px;top:412.5px;width:1.4px;height:36.5px;background:#b4b4b4"></div>
<div class="t " style="left:1097.0px;top:420.56px;font-size:15.4px;letter-spacing:0.17px;line-height:18px;color:#fff;">Manufacturer</div>
<svg class="a" style="left:1229.7px;top:421.3px;" width="12" height="16" viewBox="0 0 12 16"><path d="M0.9 6.4 L5.8 1.1 L10.7 6.4 Z M0.9 9.2 L10.7 9.2 L5.8 14.6 Z" fill="#e2e2e2" stroke="#e2e2e2" stroke-width="0.7" stroke-linejoin="round"/></svg>
<svg class="a" style="left:1248.3px;top:421.7px;" width="19" height="18" viewBox="0 0 19 18"><path d="M0.2 0.2 H18.5 L12.2 7.4 V17.2 L6.9 13.8 V7.4 Z" fill="#e2e2e2" stroke="#e2e2e2" stroke-width="0.4" stroke-linejoin="round"/></svg>
<div class="a" style="left:1275.9px;top:412.5px;width:1.4px;height:36.5px;background:#b4b4b4"></div>
<div class="t " style="left:1282.1px;top:420.56px;font-size:15.4px;letter-spacing:0.17px;line-height:18px;color:#fff;">NDC</div>
<svg class="a" style="left:1354.7px;top:421.3px;" width="12" height="16" viewBox="0 0 12 16"><path d="M0.9 6.4 L5.8 1.1 L10.7 6.4 Z M0.9 9.2 L10.7 9.2 L5.8 14.6 Z" fill="#e2e2e2" stroke="#e2e2e2" stroke-width="0.7" stroke-linejoin="round"/></svg>
<svg class="a" style="left:1373.3px;top:421.7px;" width="19" height="18" viewBox="0 0 19 18"><path d="M0.2 0.2 H18.5 L12.2 7.4 V17.2 L6.9 13.8 V7.4 Z" fill="#e2e2e2" stroke="#e2e2e2" stroke-width="0.4" stroke-linejoin="round"/></svg>
<div class="a" style="left:1400.9px;top:412.5px;width:1.4px;height:36.5px;background:#b4b4b4"></div>
<div class="t " style="left:1407.1px;top:420.56px;font-size:15.4px;letter-spacing:0.17px;line-height:18px;color:#fff;">Series</div>
<svg class="a" style="left:1490.7px;top:421.3px;" width="12" height="16" viewBox="0 0 12 16"><path d="M0.9 6.4 L5.8 1.1 L10.7 6.4 Z M0.9 9.2 L10.7 9.2 L5.8 14.6 Z" fill="#e2e2e2" stroke="#e2e2e2" stroke-width="0.7" stroke-linejoin="round"/></svg>
<svg class="a" style="left:1509.3px;top:421.7px;" width="19" height="18" viewBox="0 0 19 18"><path d="M0.2 0.2 H18.5 L12.2 7.4 V17.2 L6.9 13.8 V7.4 Z" fill="#e2e2e2" stroke="#e2e2e2" stroke-width="0.4" stroke-linejoin="round"/></svg>
<div class="a" style="left:1536.9px;top:412.5px;width:1.4px;height:36.5px;background:#b4b4b4"></div>
<div class="t " style="left:1543.1px;top:420.56px;font-size:15.4px;letter-spacing:0.17px;line-height:18px;color:#fff;">Strength</div>
<svg class="a" style="left:1641.5px;top:421.3px;" width="12" height="16" viewBox="0 0 12 16"><path d="M0.9 6.4 L5.8 1.1 L10.7 6.4 Z M0.9 9.2 L10.7 9.2 L5.8 14.6 Z" fill="#e2e2e2" stroke="#e2e2e2" stroke-width="0.7" stroke-linejoin="round"/></svg>
<svg class="a" style="left:1660.1px;top:421.7px;" width="19" height="18" viewBox="0 0 19 18"><path d="M0.2 0.2 H18.5 L12.2 7.4 V17.2 L6.9 13.8 V7.4 Z" fill="#e2e2e2" stroke="#e2e2e2" stroke-width="0.4" stroke-linejoin="round"/></svg>
<div class="a" style="left:1687.7px;top:412.5px;width:1.4px;height:36.5px;background:#b4b4b4"></div>
<div class="t " style="left:1693.8999999999999px;top:420.56px;font-size:15.4px;letter-spacing:0.17px;line-height:18px;color:#fff;">Dose</div>
<svg class="a" style="left:1769.6000000000001px;top:421.3px;" width="12" height="16" viewBox="0 0 12 16"><path d="M0.9 6.4 L5.8 1.1 L10.7 6.4 Z M0.9 9.2 L10.7 9.2 L5.8 14.6 Z" fill="#e2e2e2" stroke="#e2e2e2" stroke-width="0.7" stroke-linejoin="round"/></svg>
<svg class="a" style="left:1788.2px;top:421.7px;" width="19" height="18" viewBox="0 0 19 18"><path d="M0.2 0.2 H18.5 L12.2 7.4 V17.2 L6.9 13.8 V7.4 Z" fill="#e2e2e2" stroke="#e2e2e2" stroke-width="0.4" stroke-linejoin="round"/></svg>
<div class="a" style="left:1815.8000000000002px;top:412.5px;width:1.4px;height:36.5px;background:#b4b4b4"></div>
<div class="t " style="left:1822.0px;top:420.56px;font-size:15.4px;letter-spacing:0.17px;line-height:18px;color:#fff;">Comments/Reaction</div>
<svg class="a" style="left:2003.6000000000001px;top:421.3px;" width="12" height="16" viewBox="0 0 12 16"><path d="M0.9 6.4 L5.8 1.1 L10.7 6.4 Z M0.9 9.2 L10.7 9.2 L5.8 14.6 Z" fill="#e2e2e2" stroke="#e2e2e2" stroke-width="0.7" stroke-linejoin="round"/></svg>
<svg class="a" style="left:2022.2px;top:421.7px;" width="19" height="18" viewBox="0 0 19 18"><path d="M0.2 0.2 H18.5 L12.2 7.4 V17.2 L6.9 13.8 V7.4 Z" fill="#e2e2e2" stroke="#e2e2e2" stroke-width="0.4" stroke-linejoin="round"/></svg>
<div class="a" style="left:23.9px;top:424.1px;width:12.4px;height:12.9px;background:#fff;border-radius:2px"></div>
<div class="a" style="left:13px;top:449px;width:2023px;height:33px;background:#fff"></div>
<div class="a" style="left:13px;top:482px;width:2023px;height:45.2px;background:#f0eff4"></div>
<div class="a" style="left:13px;top:527.2px;width:2023px;height:42.59999999999991px;background:#f5f5f7"></div>
<div class="a" style="left:46.8px;top:449px;width:1px;height:78.20000000000005px;background:#c6c6c6"></div>
<div class="a" style="left:197.0px;top:449px;width:1px;height:78.20000000000005px;background:#c6c6c6"></div>
<div class="a" style="left:368.6px;top:449px;width:1px;height:78.20000000000005px;background:#c6c6c6"></div>
<div class="a" style="left:538.6px;top:449px;width:1px;height:78.20000000000005px;background:#c6c6c6"></div>
<div class="a" style="left:695.8px;top:449px;width:1px;height:78.20000000000005px;background:#c6c6c6"></div>
<div class="a" style="left:829.3px;top:449px;width:1px;height:78.20000000000005px;background:#c6c6c6"></div>
<div class="a" style="left:947.6px;top:449px;width:1px;height:78.20000000000005px;background:#c6c6c6"></div>
<div class="a" style="left:1090.9px;top:449px;width:1px;height:78.20000000000005px;background:#c6c6c6"></div>
<div class="a" style="left:1276.0px;top:449px;width:1px;height:78.20000000000005px;background:#c6c6c6"></div>
<div class="a" style="left:1401.0px;top:449px;width:1px;height:78.20000000000005px;background:#c6c6c6"></div>
<div class="a" style="left:1537.0px;top:449px;width:1px;height:78.20000000000005px;background:#c6c6c6"></div>
<div class="a" style="left:1687.8px;top:449px;width:1px;height:78.20000000000005px;background:#c6c6c6"></div>
<div class="a" style="left:1815.9px;top:449px;width:1px;height:78.20000000000005px;background:#c6c6c6"></div>
<div class="a" style="left:23.2px;top:457.9px;width:12px;height:12px;border:1px solid #777;background:#fff;border-radius:2.5px"></div>
<div class="a" style="left:23.2px;top:490.9px;width:12px;height:12px;border:1px solid #777;background:#fff;border-radius:2.5px"></div>
<div class="a" style="left:23.2px;top:536.2px;width:12px;height:12px;border:1px solid #777;background:#fff;border-radius:2.5px"></div>
<div class="t u" style="left:52.8px;top:453.96px;font-size:15.4px;letter-spacing:0.17px;line-height:18px;color:#000;">Td (adult)</div>
<div class="t " style="left:203px;top:453.96px;font-size:15.4px;letter-spacing:0.17px;line-height:18px;color:#000;">09</div>
<div class="t " style="left:374.6px;top:453.96px;font-size:15.4px;letter-spacing:0.17px;line-height:18px;color:#000;">04-28-1999 12:07:00</div>
<div class="t " style="left:544.6px;top:453.96px;font-size:15.4px;letter-spacing:0.17px;line-height:18px;color:#000;">04-28-2009</div>
<div class="t " style="left:701.8px;top:453.96px;font-size:15.4px;letter-spacing:0.17px;line-height:18px;color:#000;">IM</div>
<div class="t " style="left:835.3px;top:453.96px;font-size:15.4px;letter-spacing:0.17px;line-height:18px;color:#000;">RA</div>
<div class="t " style="left:953.6px;top:453.96px;font-size:15.4px;letter-spacing:0.17px;line-height:18px;color:#000;">4598</div>
<div class="t " style="left:1096.9px;top:453.96px;font-size:15.4px;letter-spacing:0.17px;line-height:18px;color:#000;">Aventis Pasteur</div>
<div class="t " style="left:1693.8px;top:453.96px;font-size:15.4px;letter-spacing:0.17px;line-height:18px;color:#000;">cc</div>
<div class="t u" style="left:52.8px;top:486.46px;font-size:15.4px;letter-spacing:0.17px;line-height:18px;color:#000;">influenza, live,</div>
<div class="t u" style="left:52.8px;top:504.06px;font-size:15.4px;letter-spacing:0.17px;line-height:18px;color:#000;">intranasal</div>
<div class="t " style="left:203px;top:486.46px;font-size:15.4px;letter-spacing:0.17px;line-height:18px;color:#000;">111</div>
<div class="t " style="left:374.6px;top:486.46px;font-size:15.4px;letter-spacing:0.17px;line-height:18px;color:#000;">10-11-2011</div>
<div class="a" style="left:13px;top:569.8px;width:2023px;height:21.200000000000045px;background:#fbfbfb"></div>
<svg class="a" style="left:18.5px;top:573.4px;" width="10" height="14" viewBox="0 0 10 14"><path d="M9.4 0.6 V13.4 L0.6 7 Z" fill="#8a8a8a" stroke="#8a8a8a" stroke-width="1" stroke-linejoin="round"/></svg>
<div class="a" style="left:37px;top:574.3px;width:1483.4px;height:12.2px;background:#8b8b8b;border-radius:6.1px"></div>
<svg class="a" style="left:2020.6px;top:573.4px;" width="10" height="14" viewBox="0 0 10 14"><path d="M0.6 0.6 V13.4 L9.4 7 Z" fill="#8a8a8a" stroke="#8a8a8a" stroke-width="1" stroke-linejoin="round"/></svg>
</div>
<div class="a" style="left:12px;top:607.5px;width:2025px;height:402.5px;background:#fff;border:1px solid #d2d2d2;box-sizing:border-box"></div>
<div class="t" style="left:22.8px;top:616.59px;font-size:15.4px;letter-spacing:0.13px;line-height:19px;color:#666"><b>Medication History,</b> <span style="font-size:13.9px">6 / 47 records (<span class="u">clear filter</span>)</span></div>
<div class="a" style="left:343.2px;top:608.5px;width:1px;height:37.5px;background:#dcdcdc"></div>
<svg class="a" style="left:358.5px;top:618.0px;" width="20" height="20" viewBox="0 0 20 20"><path d="M4.9 15.6 A7.9 7.9 0 1 0 4.2 5.1" fill="none" stroke="#5a94d4" stroke-width="3.1"/><path d="M0.8 0.8 L0.8 8.5 L8.5 8.5 Z" fill="#5a94d4"/></svg>
<svg class="a" style="left:385.3px;top:617.9px;" width="20" height="20" viewBox="0 0 20 20"><circle cx="10" cy="10" r="9.6" fill="#f5f5f5"/><path d="M12.2 4.7 L6.7 10 L12.2 15.3" fill="none" stroke="#fff" stroke-width="2.8"/></svg>
<svg class="a" style="left:412.2px;top:617.9px;" width="20" height="20" viewBox="0 0 20 20"><circle cx="10" cy="10" r="9.6" fill="#f5f5f5"/><path d="M7.8 4.7 L13.3 10 L7.8 15.3" fill="none" stroke="#fff" stroke-width="2.8"/></svg>
<div class="a" style="left:439.2px;top:613.8px;width:234.40000000000003px;height:26.3px;background:#fff;border:1px solid #bdbdbd;box-sizing:border-box"></div>
<div class="t " style="left:447.4px;top:618.49px;font-size:15.9px;letter-spacing:0.1px;line-height:19px;color:#000;">Active</div>
<svg class="a" style="left:656.0px;top:623.5px;" width="13" height="9" viewBox="0 0 13 9"><path d="M1 1.5 L6.3 7 L11.6 1.5" fill="none" stroke="#222" stroke-width="1.4"/></svg>
<svg class="a" style="left:682.9px;top:619.1999999999999px;" width="19" height="19" viewBox="0 0 19 19"><path d="M0.75 0.75 H12.9 L17.65 5.5 V17.65 H0.75 Z" fill="none" stroke="#5a94d4" stroke-width="1.5"/><rect x="3.1" y="0" width="8.6" height="7.6" fill="#5a94d4"/><rect x="7.1" y="1.8" width="3.8" height="4" fill="#fff"/><path d="M4.15 17.65 V11.85 H14.35 V17.65" fill="none" stroke="#5a94d4" stroke-width="1.5"/></svg>
<svg class="a" style="left:709.6px;top:619.0px;" width="15" height="18" viewBox="0 0 15 18"><path d="M2.8 8.5 V5.4 A4.3 4.3 0 0 1 11.4 5.4 V8.5" fill="none" stroke="#5a94d4" stroke-width="2.2"/><rect x="0" y="8" width="14.2" height="9.6" rx="1" fill="#5a94d4"/></svg>
<svg class="a" style="left:1862px;top:616.5px;" width="21" height="21" viewBox="0 0 21 21"><circle cx="8.6" cy="8.6" r="6.9" fill="none" stroke="#5a94d4" stroke-width="2.9"/><path d="M13.2 13.2 L19.6 19.6" stroke="#5a94d4" stroke-width="3.2" stroke-linecap="round"/></svg>
<svg class="a" style="left:1899px;top:615.5px;" width="19" height="22" viewBox="0 0 19 22"><path d="M0.8 0.8 H12.2 L18.2 6.8 V21.2 H0.8 Z" fill="none" stroke="#5a94d4" stroke-width="1.5"/><path d="M11.8 0.8 V7.2 H18.2" fill="none" stroke="#5a94d4" stroke-width="1.5"/></svg>
<svg class="a" style="left:1935.5px;top:616.5px;" width="20" height="20" viewBox="0 0 20 20"><path d="M1.9 7.6 A8.2 8.2 0 0 1 16.2 5" fill="none" stroke="#5a94d4" stroke-width="2.9"/><path d="M19.2 0.8 V8.6 H11.4 Z" fill="#5a94d4"/><path d="M18.1 12.4 A8.2 8.2 0 0 1 3.8 15" fill="none" stroke="#5a94d4" stroke-width="2.9"/><path d="M0.8 19.2 V11.4 H8.6 Z" fill="#5a94d4"/></svg>
<svg class="a" style="left:1971.5px;top:616.5px;" width="20" height="20" viewBox="0 0 20 20"><path d="M16.94 8.08 L19.46 8.35 L19.46 11.65 L16.94 11.92 L16.26 13.55 L17.85 15.52 L15.52 17.85 L13.55 16.26 L11.92 16.94 L11.65 19.46 L8.35 19.46 L8.08 16.94 L6.45 16.26 L4.48 17.85 L2.15 15.52 L3.74 13.55 L3.06 11.92 L0.54 11.65 L0.54 8.35 L3.06 8.08 L3.74 6.45 L2.15 4.48 L4.48 2.15 L6.45 3.74 L8.08 3.06 L8.35 0.54 L11.65 0.54 L11.92 3.06 L13.55 3.74 L15.52 2.15 L17.85 4.48 L16.26 6.45 Z" fill="#5a94d4"/><circle cx="10" cy="10" r="7.06" fill="#5a94d4"/><circle cx="10" cy="10" r="3.1" fill="#fff"/></svg>
<svg class="a" style="left:2007.5px;top:620.1px;" width="21" height="14" viewBox="0 0 21 14"><path d="M1.7 2.9 L10.5 11.4 L19.3 2.9" fill="none" stroke="#5a94d4" stroke-width="4.2"/></svg>
<div class="a" style="left:0;top:0;width:2036px;height:1000px;overflow:hidden">
<div class="a" style="left:13px;top:646.5px;width:2023px;height:34.5px;background:#727272"></div>
<div class="t " style="left:17.2px;top:654.56px;font-size:15.4px;letter-spacing:0.17px;line-height:18px;color:#fff;">Status</div>
<svg class="a" style="left:101.7px;top:655.3px;" width="12" height="16" viewBox="0 0 12 16"><path d="M0.9 6.4 L5.8 1.1 L10.7 6.4 Z M0.9 9.2 L10.7 9.2 L5.8 14.6 Z" fill="#e2e2e2" stroke="#e2e2e2" stroke-width="0.7" stroke-linejoin="round"/></svg>
<svg class="a" style="left:120.3px;top:655.7px;" width="19" height="18" viewBox="0 0 19 18"><path d="M0.2 0.2 H18.5 L12.2 7.4 V17.2 L6.9 13.8 V7.4 Z" fill="#e2e2e2" stroke="#e2e2e2" stroke-width="0.4" stroke-linejoin="round"/></svg>
<div class="a" style="left:147.9px;top:646.5px;width:1.4px;height:34.5px;background:#b4b4b4"></div>
<div class="t " style="left:154.1px;top:654.56px;font-size:15.4px;letter-spacing:0.17px;line-height:18px;color:#fff;">Start Date</div>
<svg class="a" style="left:263.5px;top:655.3px;" width="12" height="16" viewBox="0 0 12 16"><path d="M0.9 6.4 L5.8 1.1 L10.7 6.4 Z M0.9 9.2 L10.7 9.2 L5.8 14.6 Z" fill="#e2e2e2" stroke="#e2e2e2" stroke-width="0.7" stroke-linejoin="round"/></svg>
<svg class="a" style="left:282.1px;top:655.7px;" width="19" height="18" viewBox="0 0 19 18"><path d="M0.2 0.2 H18.5 L12.2 7.4 V17.2 L6.9 13.8 V7.4 Z" fill="#e2e2e2" stroke="#e2e2e2" stroke-width="0.4" stroke-linejoin="round"/></svg>
<div class="a" style="left:309.7px;top:646.5px;width:1.4px;height:34.5px;background:#b4b4b4"></div>
<div class="t " style="left:315.90000000000003px;top:654.56px;font-size:15.4px;letter-spacing:0.17px;line-height:18px;color:#fff;">End Date</div>
<svg class="a" style="left:420.8px;top:655.3px;" width="12" height="16" viewBox="0 0 12 16"><path d="M0.9 6.4 L5.8 1.1 L10.7 6.4 Z M0.9 9.2 L10.7 9.2 L5.8 14.6 Z" fill="#e2e2e2" stroke="#e2e2e2" stroke-width="0.7" stroke-linejoin="round"/></svg>
<svg class="a" style="left:439.40000000000003px;top:655.7px;" width="19" height="18" viewBox="0 0 19 18"><path d="M0.2 0.2 H18.5 L12.2 7.4 V17.2 L6.9 13.8 V7.4 Z" fill="#e2e2e2" stroke="#e2e2e2" stroke-width="0.4" stroke-linejoin="round"/></svg>
<div class="a" style="left:467.0px;top:646.5px;width:1.4px;height:34.5px;background:#b4b4b4"></div>
<div class="t " style="left:473.20000000000005px;top:654.56px;font-size:15.4px;letter-spacing:0.17px;line-height:18px;color:#fff;">Drug Name</div>
<svg class="a" style="left:592.5px;top:655.3px;" width="12" height="16" viewBox="0 0 12 16"><path d="M0.9 6.4 L5.8 1.1 L10.7 6.4 Z M0.9 9.2 L10.7 9.2 L5.8 14.6 Z" fill="#e2e2e2" stroke="#e2e2e2" stroke-width="0.7" stroke-linejoin="round"/></svg>
<svg class="a" style="left:611.0999999999999px;top:655.7px;" width="19" height="18" viewBox="0 0 19 18"><path d="M0.2 0.2 H18.5 L12.2 7.4 V17.2 L6.9 13.8 V7.4 Z" fill="#e2e2e2" stroke="#e2e2e2" stroke-width="0.4" stroke-linejoin="round"/></svg>
<div class="a" style="left:638.6999999999999px;top:646.5px;width:1.4px;height:34.5px;background:#b4b4b4"></div>
<div class="t " style="left:644.9px;top:654.56px;font-size:15.4px;letter-spacing:0.17px;line-height:18px;color:#fff;">Generic Name</div>
<svg class="a" style="left:786.5px;top:655.3px;" width="12" height="16" viewBox="0 0 12 16"><path d="M0.9 6.4 L5.8 1.1 L10.7 6.4 Z M0.9 9.2 L10.7 9.2 L5.8 14.6 Z" fill="#e2e2e2" stroke="#e2e2e2" stroke-width="0.7" stroke-linejoin="round"/></svg>
<svg class="a" style="left:805.0999999999999px;top:655.7px;" width="19" height="18" viewBox="0 0 19 18"><path d="M0.2 0.2 H18.5 L12.2 7.4 V17.2 L6.9 13.8 V7.4 Z" fill="#e2e2e2" stroke="#e2e2e2" stroke-width="0.4" stroke-linejoin="round"/></svg>
<div class="a" style="left:832.6999999999999px;top:646.5px;width:1.4px;height:34.5px;background:#b4b4b4"></div>
<div class="t " style="left:838.9px;top:654.56px;font-size:15.4px;letter-spacing:0.17px;line-height:18px;color:#fff;">Sig</div>
<svg class="a" style="left:900.2px;top:655.3px;" width="12" height="16" viewBox="0 0 12 16"><path d="M0.9 6.4 L5.8 1.1 L10.7 6.4 Z M0.9 9.2 L10.7 9.2 L5.8 14.6 Z" fill="#e2e2e2" stroke="#e2e2e2" stroke-width="0.7" stroke-linejoin="round"/></svg>
<svg class="a" style="left:918.8px;top:655.7px;" width="19" height="18" viewBox="0 0 19 18"><path d="M0.2 0.2 H18.5 L12.2 7.4 V17.2 L6.9 13.8 V7.4 Z" fill="#e2e2e2" stroke="#e2e2e2" stroke-width="0.4" stroke-linejoin="round"/></svg>
<div class="a" style="left:946.4px;top:646.5px;width:1.4px;height:34.5px;background:#b4b4b4"></div>
<div class="t " style="left:952.6px;top:654.56px;font-size:15.4px;letter-spacing:0.17px;line-height:18px;color:#fff;">Quantity</div>
<svg class="a" style="left:1050.7px;top:655.3px;" width="12" height="16" viewBox="0 0 12 16"><path d="M0.9 6.4 L5.8 1.1 L10.7 6.4 Z M0.9 9.2 L10.7 9.2 L5.8 14.6 Z" fill="#e2e2e2" stroke="#e2e2e2" stroke-width="0.7" stroke-linejoin="round"/></svg>
<svg class="a" style="left:1069.3px;top:655.7px;" width="19" height="18" viewBox="0 0 19 18"><path d="M0.2 0.2 H18.5 L12.2 7.4 V17.2 L6.9 13.8 V7.4 Z" fill="#e2e2e2" stroke="#e2e2e2" stroke-width="0.4" stroke-linejoin="round"/></svg>
<div class="a" style="left:1096.9px;top:646.5px;width:1.4px;height:34.5px;background:#b4b4b4"></div>
<div class="t " style="left:1103.1px;top:654.56px;font-size:15.4px;letter-spacing:0.17px;line-height:18px;color:#fff;">Refills</div>
<svg class="a" style="left:1184.9px;top:655.3px;" width="12" height="16" viewBox="0 0 12 16"><path d="M0.9 6.4 L5.8 1.1 L10.7 6.4 Z M0.9 9.2 L10.7 9.2 L5.8 14.6 Z" fill="#e2e2e2" stroke="#e2e2e2" stroke-width="0.7" stroke-linejoin="round"/></svg>
<svg class="a" style="left:1203.5px;top:655.7px;" width="19" height="18" viewBox="0 0 19 18"><path d="M0.2 0.2 H18.5 L12.2 7.4 V17.2 L6.9 13.8 V7.4 Z" fill="#e2e2e2" stroke="#e2e2e2" stroke-width="0.4" stroke-linejoin="round"/></svg>
<div class="a" style="left:1231.1000000000001px;top:646.5px;width:1.4px;height:34.5px;background:#b4b4b4"></div>
<div class="t " style="left:1237.3px;top:654.56px;font-size:15.4px;letter-spacing:0.17px;line-height:18px;color:#fff;">Comments</div>
<svg class="a" style="left:1352.0px;top:655.3px;" width="12" height="16" viewBox="0 0 12 16"><path d="M0.9 6.4 L5.8 1.1 L10.7 6.4 Z M0.9 9.2 L10.7 9.2 L5.8 14.6 Z" fill="#e2e2e2" stroke="#e2e2e2" stroke-width="0.7" stroke-linejoin="round"/></svg>
<svg class="a" style="left:1370.6px;top:655.7px;" width="19" height="18" viewBox="0 0 19 18"><path d="M0.2 0.2 H18.5 L12.2 7.4 V17.2 L6.9 13.8 V7.4 Z" fill="#e2e2e2" stroke="#e2e2e2" stroke-width="0.4" stroke-linejoin="round"/></svg>
<div class="a" style="left:1398.2px;top:646.5px;width:1.4px;height:34.5px;background:#b4b4b4"></div>
<div class="t " style="left:1404.3999999999999px;top:654.56px;font-size:15.4px;letter-spacing:0.17px;line-height:18px;color:#fff;">Entered by</div>
<svg class="a" style="left:1519.9px;top:655.3px;" width="12" height="16" viewBox="0 0 12 16"><path d="M0.9 6.4 L5.8 1.1 L10.7 6.4 Z M0.9 9.2 L10.7 9.2 L5.8 14.6 Z" fill="#e2e2e2" stroke="#e2e2e2" stroke-width="0.7" stroke-linejoin="round"/></svg>
<svg class="a" style="left:1538.5px;top:655.7px;" width="19" height="18" viewBox="0 0 19 18"><path d="M0.2 0.2 H18.5 L12.2 7.4 V17.2 L6.9 13.8 V7.4 Z" fill="#e2e2e2" stroke="#e2e2e2" stroke-width="0.4" stroke-linejoin="round"/></svg>
<div class="a" style="left:1566.1000000000001px;top:646.5px;width:1.4px;height:34.5px;background:#b4b4b4"></div>
<div class="t " style="left:1572.3px;top:654.56px;font-size:15.4px;letter-spacing:0.17px;line-height:18px;color:#fff;">Therapeutic Class</div>
<svg class="a" style="left:1738.4px;top:655.3px;" width="12" height="16" viewBox="0 0 12 16"><path d="M0.9 6.4 L5.8 1.1 L10.7 6.4 Z M0.9 9.2 L10.7 9.2 L5.8 14.6 Z" fill="#e2e2e2" stroke="#e2e2e2" stroke-width="0.7" stroke-linejoin="round"/></svg>
<svg class="a" style="left:1757.0px;top:655.7px;" width="19" height="18" viewBox="0 0 19 18"><path d="M0.2 0.2 H18.5 L12.2 7.4 V17.2 L6.9 13.8 V7.4 Z" fill="#e2e2e2" stroke="#e2e2e2" stroke-width="0.4" stroke-linejoin="round"/></svg>
<div class="a" style="left:1784.6000000000001px;top:646.5px;width:1.4px;height:34.5px;background:#b4b4b4"></div>
<div class="t " style="left:1790.8px;top:654.56px;font-size:15.4px;letter-spacing:0.17px;line-height:18px;color:#fff;">Prescriber</div>
<svg class="a" style="left:1901.7px;top:655.3px;" width="12" height="16" viewBox="0 0 12 16"><path d="M0.9 6.4 L5.8 1.1 L10.7 6.4 Z M0.9 9.2 L10.7 9.2 L5.8 14.6 Z" fill="#e2e2e2" stroke="#e2e2e2" stroke-width="0.7" stroke-linejoin="round"/></svg>
<svg class="a" style="left:1920.3px;top:655.7px;" width="19" height="18" viewBox="0 0 19 18"><path d="M0.2 0.2 H18.5 L12.2 7.4 V17.2 L6.9 13.8 V7.4 Z" fill="#e2e2e2" stroke="#e2e2e2" stroke-width="0.4" stroke-linejoin="round"/></svg>
<div class="a" style="left:1947.9px;top:646.5px;width:1.4px;height:34.5px;background:#b4b4b4"></div>
<div class="t " style="left:1954.1px;top:654.56px;font-size:15.4px;letter-spacing:0.17px;line-height:18px;color:#fff;">Modified By</div>
<svg class="a" style="left:2201.7px;top:655.3px;" width="12" height="16" viewBox="0 0 12 16"><path d="M0.9 6.4 L5.8 1.1 L10.7 6.4 Z M0.9 9.2 L10.7 9.2 L5.8 14.6 Z" fill="#e2e2e2" stroke="#e2e2e2" stroke-width="0.7" stroke-linejoin="round"/></svg>
<svg class="a" style="left:2220.3px;top:655.7px;" width="19" height="18" viewBox="0 0 19 18"><path d="M0.2 0.2 H18.5 L12.2 7.4 V17.2 L6.9 13.8 V7.4 Z" fill="#e2e2e2" stroke="#e2e2e2" stroke-width="0.4" stroke-linejoin="round"/></svg>
<div class="a" style="left:13px;top:681px;width:2023px;height:215px;background:#fff"></div>
<div class="a" style="left:13px;top:896px;width:2023px;height:45px;background:#f0eff4"></div>
<div class="a" style="left:13px;top:941px;width:2023px;height:60px;background:#fff"></div>
<div class="a" style="left:148.0px;top:681px;width:1px;height:319px;background:#c6c6c6"></div>
<div class="a" style="left:309.8px;top:681px;width:1px;height:319px;background:#c6c6c6"></div>
<div class="a" style="left:467.1px;top:681px;width:1px;height:319px;background:#c6c6c6"></div>
<div class="a" style="left:638.8px;top:681px;width:1px;height:319px;background:#c6c6c6"></div>
<div class="a" style="left:832.8px;top:681px;width:1px;height:319px;background:#c6c6c6"></div>
<div class="a" style="left:946.5px;top:681px;width:1px;height:319px;background:#c6c6c6"></div>
<div class="a" style="left:1097.0px;top:681px;width:1px;height:319px;background:#c6c6c6"></div>
<div class="a" style="left:1231.2px;top:681px;width:1px;height:319px;background:#c6c6c6"></div>
<div class="a" style="left:1398.3px;top:681px;width:1px;height:319px;background:#c6c6c6"></div>
<div class="a" style="left:1566.2px;top:681px;width:1px;height:319px;background:#c6c6c6"></div>
<div class="a" style="left:1784.7px;top:681px;width:1px;height:319px;background:#c6c6c6"></div>
<div class="a" style="left:1948.0px;top:681px;width:1px;height:319px;background:#c6c6c6"></div>
</div>
<div class="a" style="left:0;top:0;width:2036px;height:1000px;overflow:hidden">
<div class="t " style="left:17.6px;top:685.66px;font-size:15.4px;letter-spacing:0.17px;line-height:18px;color:#000;">Active</div>
<div class="t " style="left:153.4px;top:685.66px;font-size:15.4px;letter-spacing:0.17px;line-height:18px;color:#000;">08-25-2010</div>
<div class="t u" style="left:473px;top:685.66px;font-size:15.4px;letter-spacing:0.17px;line-height:18px;color:#000;">Aspirin Oral 81mg</div>
<div class="t " style="left:645.2px;top:685.66px;font-size:15.4px;letter-spacing:0.17px;line-height:18px;color:#000;">aspirin</div>
<div class="t " style="left:838.8px;top:685.66px;font-size:15.4px;letter-spacing:0.17px;line-height:18px;color:#000;">1 tablet every</div>
<div class="t " style="left:838.8px;top:703.66px;font-size:15.4px;letter-spacing:0.17px;line-height:18px;color:#000;">day</div>
<div class="t " style="left:1217.5px;top:685.66px;font-size:15.4px;letter-spacing:0.17px;line-height:18px;color:#000;">0</div>
<svg class="a" style="left:1242px;top:688.2px;" width="19" height="19" viewBox="0 0 19 19"><circle cx="9.5" cy="9.5" r="9.2" fill="#a53a2a"/><rect x="8" y="3.6" width="3" height="7.6" rx="0.6" fill="#fff"/><rect x="8" y="12.6" width="3" height="2.9" rx="0.5" fill="#fff"/></svg>
<div class="t " style="left:1265.3px;top:690.26px;font-size:15.4px;letter-spacing:0.17px;line-height:18px;color:#000;"><b>Drug Interaction</b>:</div>
<div class="t " style="left:1237.4px;top:708.26px;font-size:15.4px;letter-spacing:0.17px;line-height:18px;color:#000;">Coumadin, ibuprofen</div>
<div class="t " style="left:1237.4px;top:726.16px;font-size:15.4px;letter-spacing:0.17px;line-height:18px;color:#000;">oral, Lasix oral,</div>
<div class="t " style="left:1237.4px;top:744.06px;font-size:15.4px;letter-spacing:0.17px;line-height:18px;color:#000;">Lisinopril</div>
<svg class="a" style="left:1239.8px;top:760.6px;" width="22" height="22" viewBox="0 0 22 22"><path d="M11 0.4 Q11.9 0.4 12.5 1.4 L21.4 18.9 Q21.9 20.9 20.3 21.1 H1.7 Q0.1 20.9 0.6 18.9 L9.5 1.4 Q10.1 0.4 11 0.4 Z" fill="#f0d354"/><rect x="9.3" y="7.3" width="3.6" height="5.6" fill="#fff"/><rect x="9.3" y="15.4" width="3.6" height="2.8" fill="#fff"/></svg>
<div class="t " style="left:1265.3px;top:765.96px;font-size:15.4px;letter-spacing:0.17px;line-height:18px;color:#000;"><b>Duplicated</b></div>
<div class="t " style="left:1237.4px;top:783.66px;font-size:15.4px;letter-spacing:0.17px;line-height:18px;color:#000;"><b>Therapy</b>: Coumadin,</div>
<div class="t " style="left:1237.4px;top:801.46px;font-size:15.4px;letter-spacing:0.17px;line-height:18px;color:#000;">ibuprofen oral</div>
<div class="t " style="left:1237.4px;top:819.43px;font-size:15.4px;letter-spacing:0.17px;line-height:18px;color:#000;">Refilled until: 2010-</div>
<div class="t " style="left:1237.4px;top:837.40px;font-size:15.4px;letter-spacing:0.17px;line-height:18px;color:#000;">09-25</div>
<div class="t " style="left:1237.4px;top:855.37px;font-size:15.4px;letter-spacing:0.17px;line-height:18px;color:#000;">Refilled on: 2010-08-</div>
<div class="t " style="left:1237.4px;top:873.34px;font-size:15.4px;letter-spacing:0.17px;line-height:18px;color:#000;">26,2010-08-25,</div>
<div class="t " style="left:1404.5px;top:685.66px;font-size:15.4px;letter-spacing:0.17px;line-height:18px;color:#000;">Selenium, Selenium</div>
<div class="t " style="left:1572px;top:685.66px;font-size:15.4px;letter-spacing:0.17px;line-height:18px;color:#000;">Analgesic, Anti-inflammatory</div>
<div class="t " style="left:1572px;top:703.66px;font-size:15.4px;letter-spacing:0.17px;line-height:18px;color:#000;">or Antipyretic</div>
<div class="t " style="left:1954px;top:685.66px;font-size:15.4px;letter-spacing:0.17px;line-height:18px;color:#000;">2010-08-25</div>
<div class="t " style="left:1954px;top:703.66px;font-size:15.4px;letter-spacing:0.17px;line-height:18px;color:#000;">by <span class="u">SS</span></div>
<div class="t " style="left:17.6px;top:900.36px;font-size:15.4px;letter-spacing:0.17px;line-height:18px;color:#000;">Active</div>
<div class="t u" style="left:473px;top:900.36px;font-size:15.4px;letter-spacing:0.17px;line-height:18px;color:#000;">Calcium 500mg</div>
<div class="t " style="left:645.2px;top:900.36px;font-size:15.4px;letter-spacing:0.17px;line-height:18px;color:#000;">calcium carbonate</div>
<div class="t " style="left:838.8px;top:900.36px;font-size:15.4px;letter-spacing:0.17px;line-height:18px;color:#000;">1 tablet bid</div>
<div class="t " style="left:1217.5px;top:900.36px;font-size:15.4px;letter-spacing:0.17px;line-height:18px;color:#000;">0</div>
<div class="t " style="left:1404.5px;top:900.36px;font-size:15.4px;letter-spacing:0.17px;line-height:18px;color:#000;">Selenium, Selenium</div>
<div class="t " style="left:1954px;top:900.36px;font-size:15.4px;letter-spacing:0.17px;line-height:18px;color:#000;">2008-03-13</div>
<div class="t " style="left:1954px;top:918.36px;font-size:15.4px;letter-spacing:0.17px;line-height:18px;color:#000;">by <span class="u">SS</span></div>
<div class="t " style="left:17.6px;top:945.66px;font-size:15.4px;letter-spacing:0.17px;line-height:18px;color:#000;">Active</div>
<div class="t u" style="left:473px;top:945.66px;font-size:15.4px;letter-spacing:0.17px;line-height:18px;color:#000;">Coumadin 5mg</div>
<div class="t " style="left:645.2px;top:945.66px;font-size:15.4px;letter-spacing:0.17px;line-height:18px;color:#000;">warfarin</div>
<div class="t " style="left:838.8px;top:945.66px;font-size:15.4px;letter-spacing:0.17px;line-height:18px;color:#000;">1 tablet M-</div>
<div class="t " style="left:838.8px;top:963.66px;font-size:15.4px;letter-spacing:0.17px;line-height:18px;color:#000;">Sat, 1/2 tablet</div>
<div class="t " style="left:838.8px;top:981.66px;font-size:15.4px;letter-spacing:0.17px;line-height:18px;color:#000;">Sun</div>
<div class="t " style="left:1209px;top:945.66px;font-size:15.4px;letter-spacing:0.17px;line-height:18px;color:#000;">11</div>
<svg class="a" style="left:1242px;top:947.6px;" width="19" height="19" viewBox="0 0 19 19"><circle cx="9.5" cy="9.5" r="9.2" fill="#a53a2a"/><rect x="8" y="3.6" width="3" height="7.6" rx="0.6" fill="#fff"/><rect x="8" y="12.6" width="3" height="2.9" rx="0.5" fill="#fff"/></svg>
<div class="t " style="left:1265.3px;top:949.66px;font-size:15.4px;letter-spacing:0.17px;line-height:18px;color:#000;"><b>Drug Interaction</b>:</div>
<div class="t " style="left:1237.4px;top:967.66px;font-size:15.4px;letter-spacing:0.17px;line-height:18px;color:#000;">Aspirin Oral,</div>
<div class="t " style="left:1237.4px;top:985.66px;font-size:15.4px;letter-spacing:0.17px;line-height:18px;color:#000;">ibuprofen oral</div>
<div class="t " style="left:1404.5px;top:945.66px;font-size:15.4px;letter-spacing:0.17px;line-height:18px;color:#000;">Selenium, Selenium</div>
<div class="t " style="left:1790.5px;top:945.66px;font-size:15.4px;letter-spacing:0.17px;line-height:18px;color:#000;">Selenium, Selenium</div>
<div class="t " style="left:1954px;top:945.66px;font-size:15.4px;letter-spacing:0.17px;line-height:18px;color:#000;">2009-05-07</div>
<div class="t " style="left:1954px;top:963.66px;font-size:15.4px;letter-spacing:0.17px;line-height:18px;color:#000;">by <span class="u">SS</span></div>
</div>
</body></html>
